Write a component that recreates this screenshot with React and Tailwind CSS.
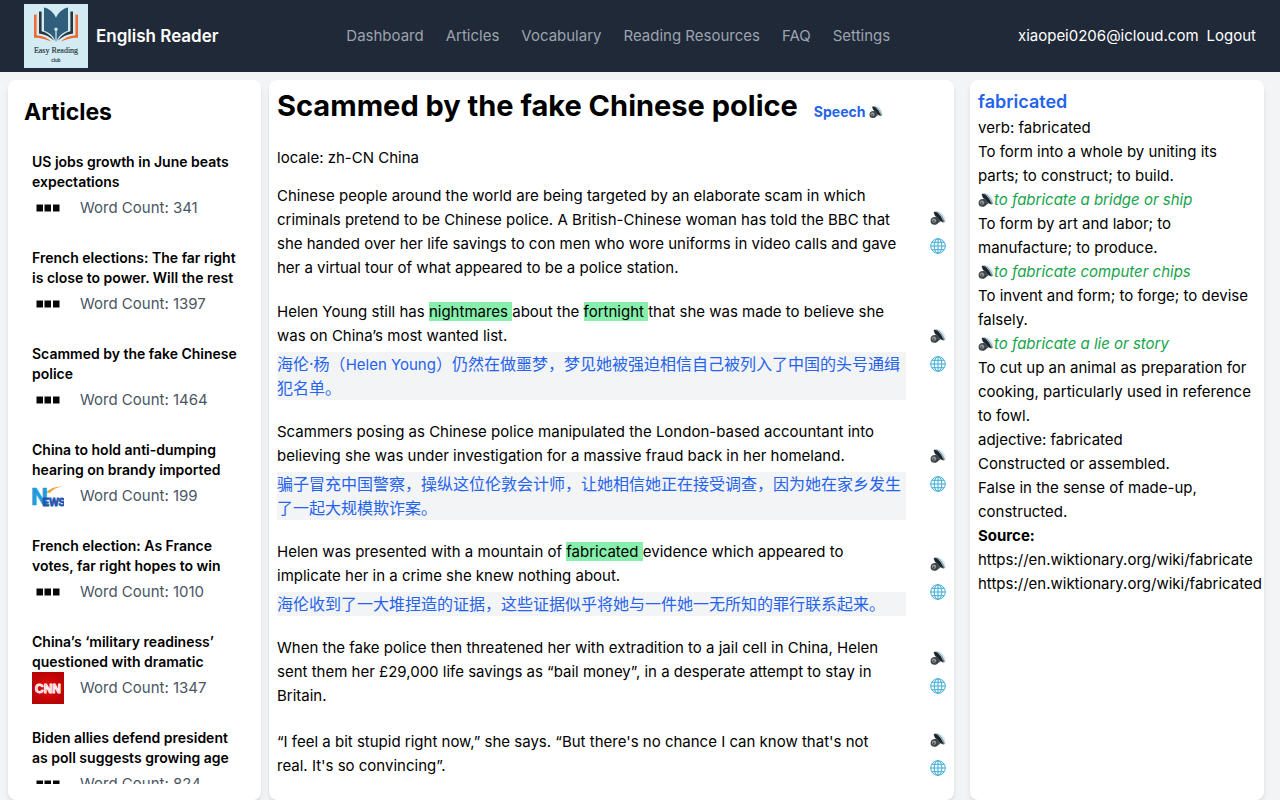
import React from "react";

const navLinks = ["Dashboard", "Articles", "Vocabulary", "Reading Resources", "FAQ", "Settings"];

const articles = [
  { title: "US jobs growth in June beats expectations", count: 341, source: "bbc" },
  { title: "French elections: The far right is close to power. Will the rest", count: 1397, source: "bbc" },
  { title: "Scammed by the fake Chinese police", count: 1464, source: "bbc" },
  { title: "China to hold anti-dumping hearing on brandy imported", count: 199, source: "news" },
  { title: "French election: As France votes, far right hopes to win", count: 1010, source: "bbc" },
  { title: "China’s ‘military readiness’ questioned with dramatic", count: 1347, source: "cnn" },
  { title: "Biden allies defend president as poll suggests growing age", count: 824, source: "bbc" },
];

function Mark({ children }) {
  return <mark className="bg-[#86efac] text-black">{children} </mark>;
}

const paragraphs = [
  {
    text: "Chinese people around the world are being targeted by an elaborate scam in which criminals pretend to be Chinese police. A British-Chinese woman has told the BBC that she handed over her life savings to con men who wore uniforms in video calls and gave her a virtual tour of what appeared to be a police station.",
  },
  {
    text: (
      <>
        Helen Young still has <Mark>nightmares</Mark>about the <Mark>fortnight</Mark>that she was made to believe she
        was on China’s most wanted list.
      </>
    ),
    zh: (
      <>
        海伦·杨（<span className="text-[15px] leading-none">Helen Young</span>）仍然在做噩梦，梦见她被强迫相信自己被列入了中国的头号通缉犯名单。
      </>
    ),
  },
  {
    text: "Scammers posing as Chinese police manipulated the London-based accountant into believing she was under investigation for a massive fraud back in her homeland.",
    zh: "骗子冒充中国警察，操纵这位伦敦会计师，让她相信她正在接受调查，因为她在家乡发生了一起大规模欺诈案。",
  },
  {
    text: (
      <>
        Helen was presented with a mountain of <Mark>fabricated</Mark>evidence which appeared to implicate her in a
        crime she knew nothing about.
      </>
    ),
    zh: "海伦收到了一大堆捏造的证据，这些证据似乎将她与一件她一无所知的罪行联系起来。",
  },
  {
    text: "When the fake police then threatened her with extradition to a jail cell in China, Helen sent them her £29,000 life savings as “bail money”, in a desperate attempt to stay in Britain.",
  },
  {
    text: "“I feel a bit stupid right now,” she says. “But there's no chance I can know that's not real.\u00a0It's so convincing”.",
  },
];

function Speaker({ className }) {
  return (
    <svg viewBox="0 0 16 16" className={className} aria-hidden="true">
      <path d="M6 1C9.500.4 14 3.600 15.500 8.600l.2 3.200-3.400.6L4.600 4.400z" fill="#d3eaf1" />
      <path d="M3.800 2C5.200.6 9 2.200 11.600 5.400c2.200 2.800 3.600 6 2.800 6.900-1 .9-4-.6-6.600-3.500C5.200 5.900 2.900 3.100 3.800 2z" fill="#6b7a82" />
      <path d="M3.900 2.100c1.500-.4 4.700 1.200 6.500 3.900 1.900 2.700 3.100 5.400 2.600 6.100L9.600 10.400 5 5.400z" fill="#1c2428" />
      <path d="M8.500 3.600c2.200 1.300 4.100 4.100 4.700 6.600" stroke="#a3bac4" strokeWidth="1" fill="none" />
      <path d="M2.200 8 7 6.400l3.600 5-5 3.400z" fill="#4b5357" />
      <circle cx="4.400" cy="11" r="3.800" fill="#3d4346" />
      <circle cx="4" cy="10.600" r="2.200" fill="#92989b" />
      <circle cx="3.600" cy="11.200" r="1" fill="#4d5357" />
    </svg>
  );
}

function Globe() {
  return (
    <svg viewBox="0 0 16 16" className="size-4" fill="none" stroke="#42add4" strokeWidth="1" aria-hidden="true">
      <circle cx="8" cy="8" r="7.300" fill="#f3fbfe" />
      <ellipse cx="8" cy="8" rx="3.800" ry="7.300" />
      <path d="M8 .7v14.600M.7 8h14.600M2 4.300h12M2 11.700h12" />
    </svg>
  );
}

function Logo() {
  return (
    <svg viewBox="0 0 64 64" className="size-16" role="img" aria-label="Easy Reading club">
      <rect width="64" height="64" fill="#d3ecf4" />
      <path d="M20 3.500c5.500 1.200 9.500 5 12 10.200 2.500-5.200 6.500-9 12-10.200v23.200C38.500 28.500 34.500 32 32.500 37.500h-1C29.500 32 25.500 28.500 20 26.700z" fill="#315f7b" />
      <path d="M32 26v11.500" stroke="#d3ecf4" strokeWidth="1.200" />
      <circle cx="32" cy="25.200" r="1.600" fill="#d3ecf4" />
      <path d="M15 7.500h2.600v19.700c5.400 1.400 9.600 4.500 12.600 9.500C26.200 33 21.500 30.400 15 29.500zM49 7.500h-2.600v19.700c-5.400 1.400-9.600 4.500-12.600 9.500C37.800 33 42.500 30.400 49 29.500z" fill="#2d3439" />
      <path d="M10 10.500h2.600v20.700c6.200.6 11 2.800 14.900 6.500-5-2.400-10.300-3.800-17.500-4zM54 10.500h-2.600v20.700c-6.200.6-11 2.800-14.900 6.500 5-2.400 10.300-3.800 17.500-4z" fill="#f06a36" />
      <text x="32" y="49" textAnchor="middle" fontFamily="Liberation Serif, serif" fontWeight="400" fontSize="8" fill="#273238" stroke="#273238" strokeWidth=".15">Easy Reading</text>
      <text x="32" y="58" textAnchor="middle" fontFamily="Liberation Sans, sans-serif" fontWeight="700" fontSize="4.500" fill="#273238">club</text>
    </svg>
  );
}

function SourceIcon({ source }) {
  if (source === "cnn") {
    return (
      <svg viewBox="0 0 32 32" className="size-8 shrink-0" role="img" aria-label="CNN">
        <defs>
          <radialGradient id="cnn">
            <stop offset="0" stopColor="#e80808" />
            <stop offset="1" stopColor="#b90505" />
          </radialGradient>
        </defs>
        <rect width="32" height="32" fill="url(#cnn)" />
        <text x="16" y="21" textAnchor="middle" fontFamily="Liberation Sans, sans-serif" fontWeight="700" fontSize="12" fill="#f3a3a3" stroke="#fff" strokeWidth=".9" strokeLinejoin="round">CNN</text>
      </svg>
    );
  }
  if (source === "news") {
    return (
      <svg viewBox="0 0 32 32" className="size-8 shrink-0" role="img" aria-label="News">
        <path d="M14 12.500C18 8 24 6 31 6.500c-6 .7-10 2.700-13 6.500z" fill="#f4a143" />
        <text x="-1" y="25" fontFamily="Liberation Sans Narrow, Roboto, sans-serif" fontWeight="700" fontSize="24" fill="#209bdc" stroke="#209bdc" strokeWidth=".6">N</text>
        <text x="10.500" y="25.500" fontFamily="Liberation Sans, sans-serif" fontWeight="700" fontSize="10" fill="#2455ae" stroke="#2455ae" strokeWidth=".8">EWS</text>
      </svg>
    );
  }
  return (
    <svg viewBox="0 0 32 32" className="size-8 shrink-0" role="img" aria-label="BBC">
      <path d="M4.500 12.500H11v7H4.500zM12.500 12.500H19v7h-6.500zM21 12.500h6.500v7H21z" fill="#080808" />
    </svg>
  );
}

function Example({ children }) {
  return (
    <p className="flex items-center text-[#16a34a] italic">
      <button type="button" aria-label="Listen to example" className="shrink-0">
        <Speaker className="size-4" />
      </button>
      {children}
    </p>
  );
}

export default function App() {
  return (
    <div className="flex h-screen flex-col overflow-hidden bg-[#f3f4f6] font-[Inter,'Noto_Sans_CJK_SC',sans-serif] text-[15px] leading-6 text-black">
      <header className="flex h-18 shrink-0 items-center justify-between bg-[#1f2937] px-6 text-white">
        <a href="#home" className="flex items-center gap-2 text-[17px] font-semibold">
          <Logo />
          English Reader
        </a>
        <nav className="flex gap-[22px] text-[#9ca3af]">
          {navLinks.map((label) => (
            <a key={label} href="#nav">{label}</a>
          ))}
        </nav>
        <div className="flex gap-2">
          <span>xiaopei0206@icloud.com</span>
          <button type="button">Logout</button>
        </div>
      </header>

      <div className="grid min-h-0 flex-1 grid-cols-[253fr_709fr_294fr] pt-2 pr-4 pl-2">
        <aside className="flex min-h-0 min-w-0 flex-col rounded-lg bg-white p-4 shadow-md">
          <h2 className="mb-4 text-[23px] leading-8 font-bold">Articles</h2>
          <ul className="min-h-0 flex-1 overflow-hidden">
            {articles.map((a) => (
              <li key={a.title} className="mb-2 p-2">
                <h3 className="line-clamp-2 h-10 text-sm leading-5 font-semibold">{a.title}</h3>
                <div className="flex items-center gap-4 text-[#4b5563]">
                  <SourceIcon source={a.source} />
                  <span>Word Count: {a.count}</span>
                </div>
              </li>
            ))}
          </ul>
        </aside>

        <main className="mr-4 ml-2 min-w-0 overflow-hidden rounded-lg bg-white p-2 shadow-md">
          <div className="mb-[22px] flex items-center gap-4">
            <h1 className="text-[29px] leading-9 font-bold">Scammed by the fake Chinese police</h1>
            <button type="button" className="flex items-center gap-1 pt-3 text-sm font-bold text-[#2563eb]">
              Speech <Speaker className="size-3.5" />
            </button>
          </div>
          <p className="mb-3.5">locale: zh-CN China</p>
          <div className="flex flex-col gap-5">
            {paragraphs.map((p, i) => (
              <section key={i} className="flex items-center justify-between gap-6">
                <div className="min-w-0 flex-1">
                  <p>{p.text}</p>
                  {p.zh && <p lang="zh-CN" className="mt-1 bg-[#f3f4f6] text-base text-[#2563eb]">{p.zh}</p>}
                </div>
                <div className="flex shrink-0 flex-col gap-1">
                  <button type="button" aria-label="Listen" className="flex h-6 items-center">
                    <Speaker className="size-4" />
                  </button>
                  <button type="button" aria-label="Translate" className="flex h-6 items-center">
                    <Globe />
                  </button>
                </div>
              </section>
            ))}
          </div>
        </main>

        <aside className="min-w-0 rounded-lg bg-white p-2 shadow-md">
          <h2 className="text-lg leading-7 font-semibold text-[#2563eb]">fabricated</h2>
          <p>verb: fabricated</p>
          <p>To form into a whole by uniting its parts; to construct; to build.</p>
          <Example>to fabricate a bridge or ship</Example>
          <p>To form by art and labor; to manufacture; to produce.</p>
          <Example>to fabricate computer chips</Example>
          <p>To invent and form; to forge; to devise falsely.</p>
          <Example>to fabricate a lie or story</Example>
          <p>To cut up an animal as preparation for cooking, particularly used in reference to fowl.</p>
          <p>adjective: fabricated</p>
          <p>Constructed or assembled.</p>
          <p>False in the sense of made-up, constructed.</p>
          <p className="font-bold">Source:</p>
          <a href="#fabricate" className="block whitespace-nowrap">https://en.wiktionary.org/wiki/fabricate</a>
          <a href="#fabricated" className="block whitespace-nowrap">https://en.wiktionary.org/wiki/fabricated</a>
        </aside>
      </div>
    </div>
  );
}
